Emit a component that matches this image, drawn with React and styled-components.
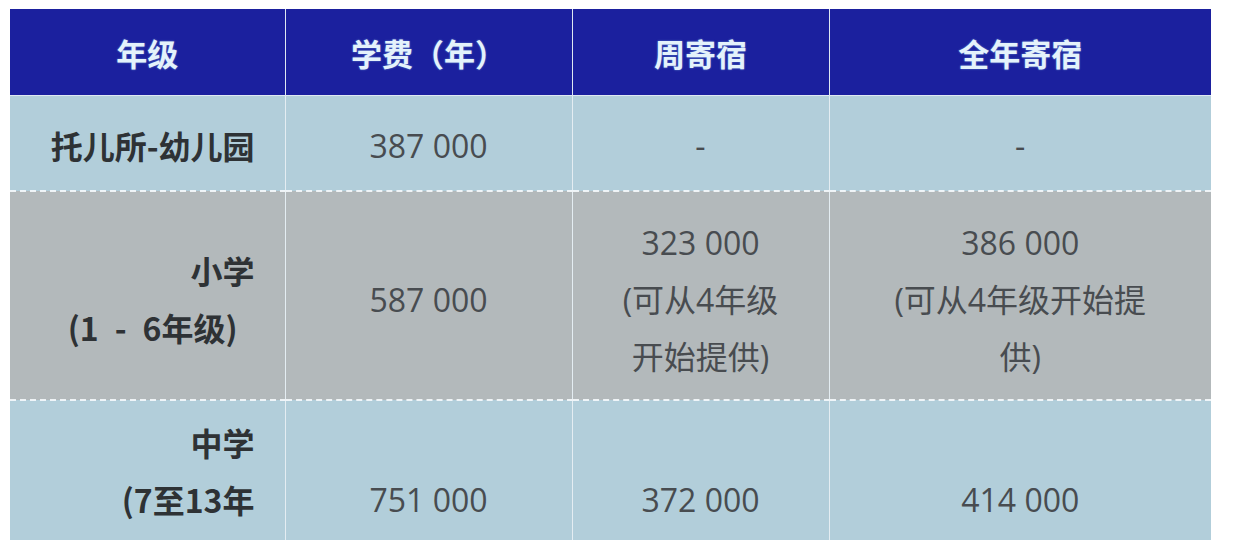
import React from 'react';
import styled, { createGlobalStyle } from 'styled-components';

const GlobalStyle = createGlobalStyle`
    html, body {
        margin: 0;
        background: #ffffff;
        font-family: "Open Sans", "Noto Sans CJK SC", sans-serif;
    }
`

const Page = styled.div`
    padding: 9px 28px 0 10px;
    height: 540px;
    overflow: hidden;
    box-sizing: border-box;
`

const Table = styled.table`
    width: 1201px;
    border-collapse: collapse;
    table-layout: fixed;
`

const HeadCell = styled.th`
    height: 86px;
    padding: 0;
    background: #1b209e;
    color: #e4f2fb;
    font-family: "Noto Sans CJK SC", sans-serif;
    font-weight: 700;
    font-size: 31px;
    text-align: center;
    border-left: 1px solid #dfe8f2;
    border-bottom: 1px solid #dfe8f2;
    text-shadow: 0 0 2px rgba(150, 210, 240, 0.6);
    &:first-child { border-left: none; }
`

const Row = styled.tr`
    height: ${p => p.$h}px;
    background: ${p => (p.$grey ? '#b3b9bb' : '#b2ceda')};
    & > td {
        border-top: ${p => (p.$dash ? '2px dashed rgba(245, 250, 252, 0.9)' : 'none')};
        padding-top: ${p => p.$pt}px;
    }
`

const Cell = styled.td`
    padding: 14px 45px;
    border-left: 1px solid #e4edf2;
    text-align: center;
    vertical-align: middle;
    font-size: 32px;
    line-height: 57px;
    color: #484c50;
    font-weight: 400;
    &:first-child { border-left: none; }
`

const LabelCell = styled(Cell)`
    padding-left: 20px;
    padding-right: 30px;
    text-align: right;
    color: #2e3235;
    font-weight: 700;
    font-family: "Noto Sans CJK SC", sans-serif;
`

const Line = styled.div`
    white-space: nowrap;
    padding-right: ${p => p.$pr || 0}px;
`

const heads = ['年级', '学费（年）', '周寄宿', '全年寄宿']

const rows = [
    { h: 95, pt: 20, label: [['托儿所-幼儿园']], cells: [['387 000'], ['-'], ['-']] },
    {
        h: 206,
        pt: 22,
        grey: true,
        dash: true,
        label: [['小学'], ['(1\u2002-\u20026年级)', 17]],
        cells: [['587 000'], ['323 000', '(可从4年级', '开始提供)'], ['386 000', '(可从4年级开始提', '供)']],
    },
    { h: 200, pt: 12, dash: true, label: [['中学'], ['(7至13年'], ['级)']], cells: [['751 000'], ['372 000'], ['414 000']] },
]

const App = () => {
    return (
        <Page>
            <GlobalStyle />
            <Table>
                <colgroup>
                    <col style={{ width: 275 }} />
                    <col style={{ width: 287 }} />
                    <col style={{ width: 257 }} />
                    <col style={{ width: 382 }} />
                </colgroup>
                <thead>
                    <tr>
                        {heads.map(h => <HeadCell key={h}>{h}</HeadCell>)}
                    </tr>
                </thead>
                <tbody>
                    {rows.map((r, i) => (
                        <Row key={i} $h={r.h} $pt={r.pt} $grey={r.grey} $dash={r.dash}>
                            <LabelCell>
                                {r.label.map(([t, pr]) => <Line key={t} $pr={pr}>{t}</Line>)}
                            </LabelCell>
                            {r.cells.map((c, j) => (
                                <Cell key={j}>
                                    {c.map(t => <Line key={t}>{t}</Line>)}
                                </Cell>
                            ))}
                        </Row>
                    ))}
                </tbody>
            </Table>
        </Page>
    )
}

export default App
